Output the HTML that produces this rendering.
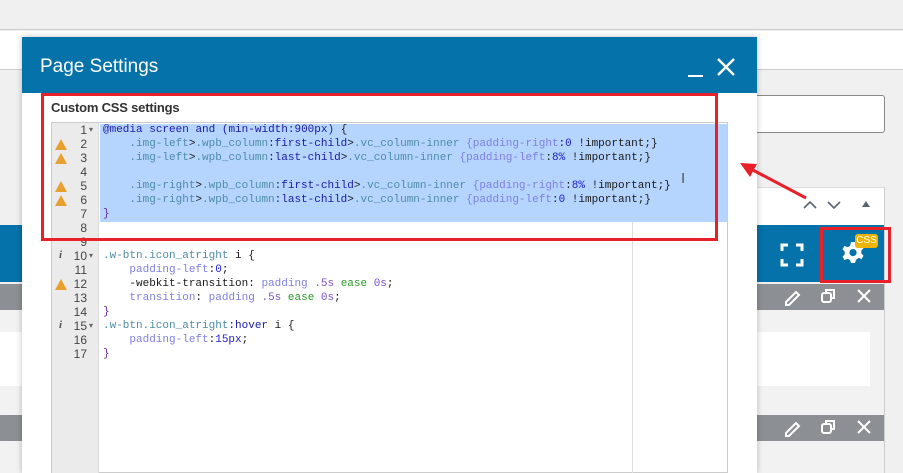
<!DOCTYPE html>
<html><head><style>
*{margin:0;padding:0;box-sizing:border-box}
body{width:903px;height:473px;overflow:hidden;position:relative;background:#f0f0f0;font-family:"Liberation Sans",sans-serif}
.a{position:absolute}
.code{font-family:"Liberation Mono",monospace;font-size:11px;line-height:14px;white-space:pre;color:#333}
.k{color:#1a1aa6}.s{color:#4f8ca6}.p{color:#7f7fe0}.n{color:#2020d0}.m{color:#1a1a1a}.g{color:#2a9a2a}.v{color:#7a4fc9}.b{color:#6a2a9a}
.gut{font-family:"Liberation Sans",sans-serif;font-size:12px;line-height:14px;color:#444;text-align:right;white-space:pre}
.warn{position:absolute;left:3px;width:0;height:0;border-left:6px solid transparent;border-right:6px solid transparent;border-bottom:11px solid #e8a030}
</style></head><body>
<div class="a" style="left:0;top:0;width:903px;height:30px;background:#f0f0f0;border-bottom:1px solid #ccc"></div>
<div class="a" style="left:0;top:31px;width:903px;height:39px;background:#fff;border-bottom:1px solid #ccc"></div>
<div class="a" style="left:740px;top:95px;width:145px;height:38px;background:#fff;border:1px solid #888;border-radius:3px"></div>
<div class="a" style="left:740px;top:187px;width:145px;height:39px;background:#fff;border:1px solid #ddd"></div>
<svg class="a" style="left:800px;top:196px" width="80" height="16"><path d="M4 12 L10 6 L16 12" stroke="#5a6470" stroke-width="1.6" fill="none"/><path d="M28 6 L34 12 L40 6" stroke="#5a6470" stroke-width="1.6" fill="none"/><path d="M62 11 L66 5 L70 11Z" fill="#5a6470"/></svg>
<div class="a" style="left:0;top:225px;width:885px;height:57px;background:#0573aa"></div>
<div class="a" style="left:0;top:284px;width:885px;height:26px;background:#8c8f94"></div>
<div class="a" style="left:0;top:310px;width:885px;height:105px;background:#f2f2f2"></div>
<div class="a" style="left:0;top:332px;width:870px;height:54px;background:#fff"></div>
<div class="a" style="left:0;top:415px;width:885px;height:26px;background:#8c8f94"></div>
<div class="a" style="left:0;top:441px;width:885px;height:32px;background:#f2f2f2"></div>
<div class="a" style="left:884px;top:187px;width:1px;height:286px;background:#ccc"></div>
<svg class="a" style="left:780px;top:243px" width="24" height="24" fill="none" stroke="#fff" stroke-width="3"><path d="M2 8V2H8M16 2H22V8M22 16V22H16M8 22H2V16"/></svg>
<svg class="a" style="left:841px;top:241px" width="24" height="24"><path fill="#fff" fill-rule="evenodd" d="M10 1h4l1 3 2.5 1.2 3-1.3 2 3.4-2.2 2.3v2.8l2.2 2.3-2 3.4-3-1.3L15 19l-1 3h-4l-1-3-2.5-1.2-3 1.3-2-3.4 2.2-2.3V10.6L1.5 8.3l2-3.4 3 1.3L9 5zM12 8a3.6 3.6 0 100 7.2A3.6 3.6 0 0012 8z"/></svg>
<div class="a" style="left:855px;top:234px;width:23px;height:14px;background:#f0b400;border-radius:3px;color:#fff;font-size:10px;line-height:14px;text-align:center">CSS</div>
<div class="a" style="left:820px;top:227px;width:71px;height:56px;border:3px solid #e8202a"></div>
<svg class="a" style="left:782px;top:286px" width="100" height="20" stroke="#fff" stroke-width="2" fill="none"><path d="M4 16L14 6l3 3L7 19H4z"/><rect x="40" y="7" width="9" height="9" rx="2"/><path d="M44 7V4h8v8h-3"/><path d="M76 4L88 16M88 4L76 16"/></svg>
<svg class="a" style="left:782px;top:417px" width="100" height="20" stroke="#fff" stroke-width="2" fill="none"><path d="M4 16L14 6l3 3L7 19H4z"/><rect x="40" y="7" width="9" height="9" rx="2"/><path d="M44 7V4h8v8h-3"/><path d="M76 4L88 16M88 4L76 16"/></svg>
<div class="a" style="left:22px;top:37px;width:735px;height:436px;background:#fff;box-shadow:0 0 6px rgba(0,0,0,.25)"></div>
<div class="a" style="left:22px;top:37px;width:735px;height:56px;background:#0573aa"></div>
<div class="a" style="left:40px;top:56px;color:#fff;font-size:19px">Page Settings</div>
<div class="a" style="left:688px;top:75px;width:15px;height:2px;background:#fff"></div>
<svg class="a" style="left:716px;top:57px" width="20" height="20" stroke="#fff" stroke-width="2.4"><path d="M2 2L18 18M18 2L2 18"/></svg>
<div class="a" style="left:51px;top:100px;font-size:13px;color:#333;font-weight:bold;letter-spacing:-0.2px">Custom CSS settings</div>
<div class="a" style="left:51px;top:122px;width:677px;height:351px;border:1px solid #ccc;background:#fff"></div>
<div class="a" style="left:52px;top:123px;width:47px;height:350px;background:#ebebeb;border-right:1px solid #ddd"></div>
<div class="a" style="left:100px;top:124px;width:627px;height:98px;background:#b5d5ff"></div>
<div class="a" style="left:632px;top:222px;width:1px;height:251px;background:#ddd"></div>
<div class="a gut" style="left:52px;top:123px;width:35px">1
2
3
4
5
6
7
8
9
10
11
12
13
14
15
16
17</div>
<div class="a" style="left:89px;top:123px;width:10px;font-size:8px;line-height:14px;color:#666;white-space:pre">▾








▾




▾</div>
<div class="a" style="left:52px;top:137px;width:20px;height:250px">
<div class="warn" style="top:2px"></div><div class="warn" style="top:16px"></div><div class="warn" style="top:44px"></div><div class="warn" style="top:58px"></div><div class="warn" style="top:142px"></div>
<div class="a" style="left:7px;top:112px;font:italic bold 11px 'Liberation Serif',serif;color:#555">i</div>
<div class="a" style="left:7px;top:182px;font:italic bold 11px 'Liberation Serif',serif;color:#555">i</div>
</div>
<div class="a code" style="left:103px;top:123px"><span class="k">@media</span> <span class="k">screen</span> <span class="k">and</span> <span class="k">(min-width:900px)</span> <span class="m">{</span>
    <span class="s">.img-left</span><span class="m">&gt;</span><span class="s">.wpb_column</span><span class="k">:first-child</span><span class="m">&gt;</span><span class="s">.vc_column-inner</span> <span class="p">{padding-right</span><span class="m">:</span><span class="n">0</span> <span class="m">!important;}</span>
    <span class="s">.img-left</span><span class="m">&gt;</span><span class="s">.wpb_column</span><span class="k">:last-child</span><span class="m">&gt;</span><span class="s">.vc_column-inner</span> <span class="p">{padding-left</span><span class="m">:</span><span class="n">8%</span> <span class="m">!important;}</span>

    <span class="s">.img-right</span><span class="m">&gt;</span><span class="s">.wpb_column</span><span class="k">:first-child</span><span class="m">&gt;</span><span class="s">.vc_column-inner</span> <span class="p">{padding-right</span><span class="m">:</span><span class="n">8%</span> <span class="m">!important;}</span>
    <span class="s">.img-right</span><span class="m">&gt;</span><span class="s">.wpb_column</span><span class="k">:last-child</span><span class="m">&gt;</span><span class="s">.vc_column-inner</span> <span class="p">{padding-left</span><span class="m">:</span><span class="n">0</span> <span class="m">!important;}</span>
<span class="b">}</span>


<span class="s">.w-btn.icon_atright</span> <span class="m">i {</span>
    <span class="p">padding-left</span><span class="m">:</span><span class="n">0</span><span class="m">;</span>
    <span class="m">-webkit-transition:</span> <span class="p">padding</span> <span class="v">.5s</span> <span class="g">ease</span> <span class="v">0s</span><span class="m">;</span>
    <span class="p">transition</span><span class="m">:</span> <span class="p">padding</span> <span class="v">.5s</span> <span class="g">ease</span> <span class="v">0s</span><span class="m">;</span>
<span class="b">}</span>
<span class="s">.w-btn.icon_atright</span><span class="k">:hover</span> <span class="m">i {</span>
    <span class="p">padding-left</span><span class="m">:</span><span class="n">15px</span><span class="m">;</span>
<span class="b">}</span></div>
<div class="a" style="left:681px;top:170px;font-size:15px;color:#555">I</div>
<div class="a" style="left:41px;top:93px;width:677px;height:148px;border:3px solid #e8202a"></div>
<svg class="a" style="left:735px;top:155px" width="80" height="50"><path d="M71 43L14 13" stroke="#e8202a" stroke-width="3"/><path d="M5 8L22 9L15 22Z" fill="#e8202a"/></svg>
</body></html>
